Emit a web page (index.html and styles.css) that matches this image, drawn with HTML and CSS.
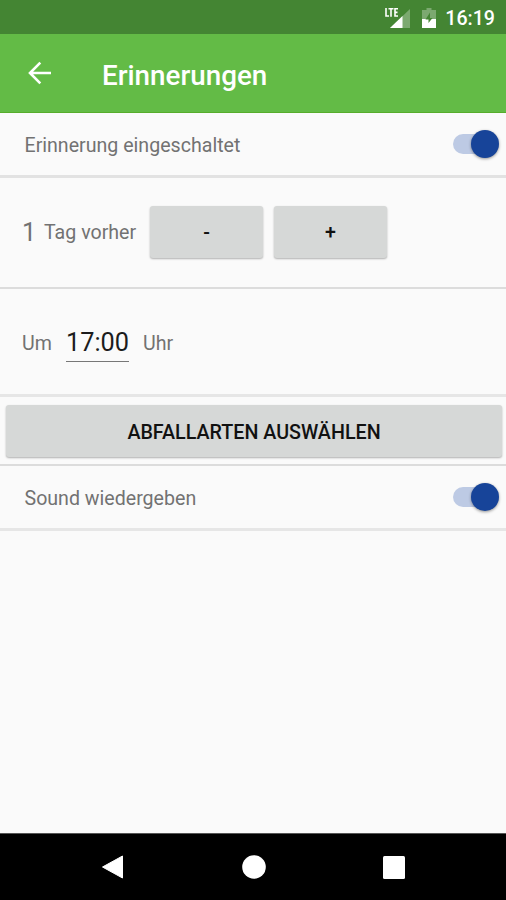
FILE: index.html
```html
<!DOCTYPE html>
<html lang="de">
<head>
<meta charset="utf-8">
<title>Erinnerungen</title>
<link rel="stylesheet" href="styles.css">
</head>
<body>
<div class="status">
  <svg class="signal" width="28" height="24" viewBox="0 0 28 24">
    <path d="M26 3V22H6Z" fill="#fff" fill-opacity=".3"/>
    <path d="M18.500 10V22H6Z" fill="#fff"/>
    <path d="M2 2V10H5M4.500 2.700H9.500M7 2.700V10.700M14 2.700H11V10H14M11 6.400H13.500" fill="none" stroke="#fff" stroke-width="1.600"/>
  </svg>
  <svg class="battery" width="14" height="20" viewBox="0 0 14 20">
    <path d="M4.500 0H9.500V2H14V20H0V2H4.500Z" fill="#fff" fill-opacity=".3"/>
    <path d="M0 11H14V20H0Z" fill="#fff"/>
    <path d="M8 4.500L3.500 11.500H6.500V15L10.500 10H8Z" fill="#448533"/>
  </svg>
  <span class="clock">16:19</span>
</div>
<header class="appbar">
  <svg class="back" width="24" height="24" viewBox="0 0 24 24"><path d="M23 12H2M12.300 1.700L2 12L12.300 22.300" fill="none" stroke="#fff" stroke-width="2.600"/></svg>
  <h1>Erinnerungen</h1>
</header>
<main>
  <section class="row toggle first"><span class="label">Erinnerung eingeschaltet</span><span class="switch"></span></section>
  <section class="row days">
    <span class="count">1</span><span class="unit">Tag vorher</span>
    <button class="btn step">-</button><button class="btn step">+</button>
  </section>
  <section class="row time"><span class="um">Um</span><span class="value">17:00</span><span class="uhr">Uhr</span></section>
  <section class="row choose"><button class="btn wide">ABFALLARTEN AUSWÄHLEN</button></section>
  <section class="row toggle sound"><span class="label">Sound wiedergeben</span><span class="switch"></span></section>
</main>
<nav class="navbar">
  <svg width="24" height="26" viewBox="0 0 24 26"><path d="M21.500 2V24L1.500 13Z" fill="#fff" stroke="#fff" stroke-linejoin="round"/></svg>
  <svg width="24" height="24" viewBox="0 0 24 24"><circle cx="12" cy="12" r="11.800" fill="#fff"/></svg>
  <svg width="22" height="23" viewBox="0 0 22 23"><rect width="22" height="23" rx="1.500" fill="#fff"/></svg>
</nav>
</body>
</html>
```
FILE: styles.css
```css
* { box-sizing: border-box; }
body {
  margin: 0;
  height: 900px;
  display: flex;
  flex-direction: column;
  overflow: hidden;
  background: #fafafa;
  color: #727272;
  font: 19.6px/24px Roboto, sans-serif;
}
.status {
  height: 34px;
  flex: none;
  display: flex;
  align-items: center;
  justify-content: flex-end;
  padding: 2px 11px 0 0;
  background: #448533;
  color: #fff;
}
.signal { margin: 0 10px 1px 0; }
.battery { margin-right: 9px; }
.clock { padding-top: 2px; font-weight: 500; }
.appbar {
  height: 79px;
  flex: none;
  display: flex;
  align-items: center;
  padding-left: 28px;
  background: #63bb46;
  border-bottom: 1px solid #56ad2b;
  color: #fff;
}
.back { margin-bottom: 1px; }
.appbar h1 {
  margin: 5px 0 0 50px;
  font-size: 27.800px;
  line-height: 34px;
  font-weight: 500;
}
main { flex: 1; }
.row {
  display: flex;
  align-items: center;
  border-bottom: 2px solid #dcdcdc;
}
.toggle {
  justify-content: space-between;
  padding: 0 7px 0 24.5px;
}
.label { padding-top: 3px; }
.first { height: 65px; border-bottom: 3px solid #e2e2e2; }
.switch {
  position: relative;
  width: 46px;
  height: 28px;
  display: flex;
  align-items: center;
}
.switch::before {
  content: "";
  width: 38px;
  height: 20px;
  border-radius: 10px;
  background: #bdcae4;
}
.switch::after {
  content: "";
  position: absolute;
  right: 0;
  top: 0;
  width: 28px;
  height: 28px;
  border-radius: 50%;
  background: #174499;
  box-shadow: 0 1px 3px rgba(0, 0, 0, .4);
}
.days { height: 111px; padding: 0 0 2px 22px; }
.count { width: 22px; padding-top: 2px; font-size: 25.300px; }
.unit { width: 106px; padding-top: 2px; }
.btn {
  border: 0;
  border-radius: 3px;
  background: #d6d8d7;
  box-shadow: 0 1px 2px rgba(0, 0, 0, .3);
  color: #111;
  font: 500 19.700px/24px Roboto, sans-serif;
  padding: 3px 0 0;
}
.step { width: 113px; height: 52px; }
.step + .step { margin-left: 11px; }
.time { height: 108px; padding-left: 22px; border-bottom: 3px solid #e6e6e6; }
.um { width: 44px; padding-top: 4px; }
.uhr { padding-top: 4px; }
.value {
  width: 63px;
  margin: 3px 14px 0 0;
  padding: 1px 0 2px;
  border-bottom: 1px solid #777;
  color: #1c1c1c;
  font-size: 25.300px;
  line-height: 33px;
}
.choose { height: 69px; padding: 0 4px 0 6px; }
.wide { width: 496px; height: 52px; padding-top: 4px; }
.sound { height: 65px; border-bottom: 3px solid #e6e6e6; }
.navbar {
  height: 67px;
  flex: none;
  display: flex;
  align-items: center;
  justify-content: space-between;
  padding: 0 101px;
  background: #000;
  border-top: 1px solid #555;
}
```
